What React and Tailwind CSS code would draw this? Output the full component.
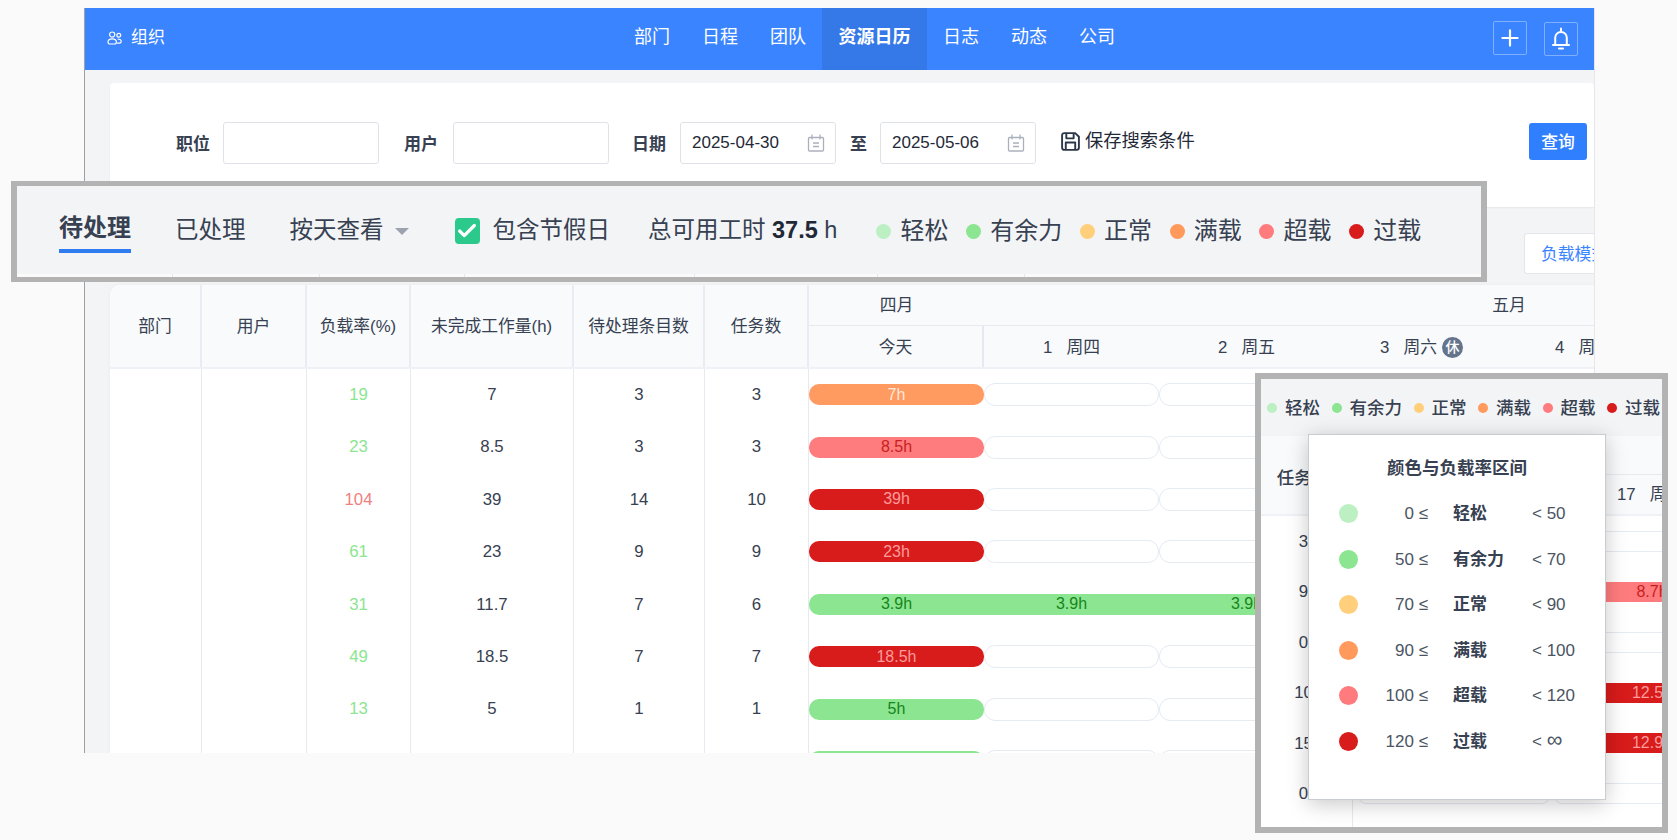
import React from 'react';
import { Plus, Check } from 'lucide-react';

const FONT = "font-['Liberation_Sans','Noto_Sans_CJK_SC',sans-serif]";

const levels = [
  { name: '轻松', from: '0', to: '50', dot: 'bg-[#bcf0c2]' },
  { name: '有余力', from: '50', to: '70', dot: 'bg-[#8ce590]' },
  { name: '正常', from: '70', to: '90', dot: 'bg-[#ffcf7c]' },
  { name: '满载', from: '90', to: '100', dot: 'bg-[#ff9a5c]' },
  { name: '超载', from: '100', to: '120', dot: 'bg-[#ff7b7e]' },
  { name: '过载', from: '120', to: '∞', dot: 'bg-[#d81b1b]' },
];

const navItems = ['部门', '日程', '团队', '资源日历', '日志', '动态', '公司'];

const barStyles = {
  orange: 'bg-[#ff9a60] text-[#ffe9dc]',
  light: 'bg-[#ff7c7e] text-[#c81e1e]',
  dark: 'bg-[#d81b1b] text-[#ff9c9c]',
  green: 'bg-[#8ce590] text-[#15861b]',
};

const rows = [
  { rate: '19', rateColor: 'text-[#8ce590]', left: '7', items: '3', tasks: '3', kind: 'orange', label: '7h' },
  { rate: '23', rateColor: 'text-[#8ce590]', left: '8.5', items: '3', tasks: '3', kind: 'light', label: '8.5h' },
  { rate: '104', rateColor: 'text-[#f08080]', left: '39', items: '14', tasks: '10', kind: 'dark', label: '39h' },
  { rate: '61', rateColor: 'text-[#8ce590]', left: '23', items: '9', tasks: '9', kind: 'dark', label: '23h' },
  { rate: '31', rateColor: 'text-[#8ce590]', left: '11.7', items: '7', tasks: '6', kind: 'green', label: '3.9h', long: true },
  { rate: '49', rateColor: 'text-[#8ce590]', left: '18.5', items: '7', tasks: '7', kind: 'dark', label: '18.5h' },
  { rate: '13', rateColor: 'text-[#8ce590]', left: '5', items: '1', tasks: '1', kind: 'green', label: '5h' },
  { rate: '', rateColor: '', left: '', items: '', tasks: '', kind: 'green', label: '' },
];

const CalendarIcon = () => (
  <svg width="18" height="18" viewBox="0 0 18 18" fill="none" stroke="#aab1bd" strokeWidth="1.3">
    <rect x="1.5" y="3.5" width="15" height="13.5" rx="1" />
    <path d="M5 0.5v5M13 0.5v5M6 9h6M6 12.5h6" />
  </svg>
);

const OrgIcon = () => (
  <svg width="15" height="14" viewBox="0 0 15 14" fill="none" stroke="currentColor" strokeWidth="1.2">
    <circle cx="5.2" cy="3.6" r="2.6" />
    <circle cx="11.8" cy="4.2" r="1.9" />
    <path d="M1 11.2c0-2.2 1.9-3.4 4.2-3.4s4.2 1.2 4.2 3.4c0 1.2-1 1.8-2 1.8H3c-1 0-2-.6-2-1.8z" />
    <path d="M10.6 8c2 0 3.6.9 3.6 2.6 0 1-.8 1.6-1.7 1.6h-2.4" />
  </svg>
);

const BellIcon = () => (
  <svg width="22" height="24" viewBox="0 0 22 24" fill="none" stroke="currentColor" strokeWidth="2" strokeLinecap="round">
    <path d="M11 1.5v2.2" />
    <path d="M5.2 17.5v-6.8a5.8 5.8 0 0 1 11.6 0v6.8" />
    <path d="M3 18h16" />
    <path d="M9 21.5h4" />
  </svg>
);

const SaveIcon = () => (
  <svg width="21" height="21" viewBox="0 0 20 20" fill="none" stroke="#2b3648" strokeWidth="1.8" strokeLinejoin="round">
    <path d="M4 2h10.5L18 5.5V16a2 2 0 0 1-2 2H4a2 2 0 0 1-2-2V4a2 2 0 0 1 2-2z" />
    <path d="M6 2v5h7V2" />
    <path d="M5.5 18v-7h9v7" />
  </svg>
);

const TextInput = ({ value }) => (
  <div className="flex h-[42px] w-[156px] items-center justify-between rounded-[3px] border border-[#dfe3e8] bg-white pl-[11px] pr-[10px] text-[17px] text-[#1f2937]">
    <span>{value}</span>
    {value && <CalendarIcon />}
  </div>
);

const Legend = ({ big }) => (
  <div className={big ? 'flex items-center gap-[17.75px] whitespace-nowrap' : 'flex items-center gap-[11.5px] whitespace-nowrap'}>
    {levels.map((l) => (
      <div key={l.name} className={big ? 'flex items-center gap-[9px]' : 'flex items-center gap-[8px]'}>
        <span className={`${l.dot} ${big ? 'h-[15px] w-[15px]' : 'h-[10px] w-[10px]'} shrink-0 rounded-full`}></span>
        <span className={big ? 'text-[24px] text-[#374151]' : 'text-[17.5px] font-medium text-[#374151]'}>{l.name}</span>
      </div>
    ))}
  </div>
);

const DayBar = ({ kind, label }) => (
  <div className={`${barStyles[kind]} flex h-[21px] items-center justify-center rounded-[10px] text-[16px]`}>{label}</div>
);

const EmptyBar = () => <div className="h-[23px] rounded-[11px] border-[1.5px] border-[#e6eaf1] bg-white"></div>;

const Row = ({ row }) => (
  <div className="contents">
    <div className="border-r border-[#e6eaf0]"></div>
    <div className="border-r border-[#e6eaf0]"></div>
    <div className={`flex items-center justify-center border-r border-[#e6eaf0] ${row.rateColor}`}>{row.rate}</div>
    <div className="flex items-center justify-center border-r border-[#e6eaf0]">{row.left}</div>
    <div className="flex items-center justify-center border-r border-[#e6eaf0]">{row.items}</div>
    <div className="flex items-center justify-center border-r border-[#e6eaf0]">{row.tasks}</div>
    {row.long ? (
      <div className="col-span-7 flex h-[21px] self-center rounded-l-[10px] bg-[#8ce590] text-[16px] text-[#15861b]">
        {Array(7)
          .fill('')
          .map((_, index) => (
            <span key={index} className="flex w-[175px] shrink-0 items-center justify-center">
              {row.label}
            </span>
          ))}
      </div>
    ) : (
      <>
        <div className="self-center">
          <DayBar kind={row.kind} label={row.label} />
        </div>
        {Array(6)
          .fill('')
          .map((_, index) => (
            <div key={index} className="self-center">
              <EmptyBar />
            </div>
          ))}
      </>
    )}
  </div>
);

const Day = ({ num, week, rest }) => (
  <div className="flex items-center justify-center border-t border-[#e6eaf0] pt-[2px]">
    <span className="mr-[14px]">{num}</span>
    <span>{week}</span>
    {rest && (
      <span className="ml-[5px] flex h-[21px] w-[21px] items-center justify-center rounded-full bg-[#64748b] text-[14px] font-medium text-white">
        休
      </span>
    )}
  </div>
);

const Table = () => (
  <div className="ml-[25px] overflow-hidden rounded-tl-[10px] bg-white text-[16.8px] text-[#374151] shadow-[0_0_4px_rgba(0,0,0,0.04)]">
    <div className="grid w-[1924px] grid-cols-[92px_105px_104px_163px_131px_104px_repeat(7,175px)] grid-rows-[40px_41.5px] border-b-2 border-[#eef1f5] bg-[#f8fafc]">
      <div className="row-span-2 flex items-center justify-center border-r-2 border-[#e9edf3] pt-[2px]">部门</div>
      <div className="row-span-2 flex items-center justify-center border-r-2 border-[#e9edf3] pt-[2px]">用户</div>
      <div className="row-span-2 flex items-center justify-center border-r-2 border-[#e9edf3] pt-[2px]">负载率(%)</div>
      <div className="row-span-2 flex items-center justify-center border-r-2 border-[#e9edf3] pt-[2px]">未完成工作量(h)</div>
      <div className="row-span-2 flex items-center justify-center border-r-2 border-[#e9edf3] pt-[2px]">待处理条目数</div>
      <div className="row-span-2 flex items-center justify-center border-r-2 border-[#e9edf3] pt-[2px]">任务数</div>
      <div className="flex items-center justify-center pt-[2px]">四月</div>
      <div className="col-span-6 flex items-center justify-center pt-[2px]">五月</div>
      <div className="flex items-center justify-center border-r-2 border-t border-[#e6eaf0] pt-[2px]">今天</div>
      <Day num="1" week="周四" />
      <Day num="2" week="周五" />
      <Day num="3" week="周六" rest />
      <Day num="4" week="周日" rest />
      <Day num="5" week="周一" />
      <Day num="6" week="周二" />
    </div>
    <div className="grid w-[1924px] grid-cols-[92px_105px_104px_163px_131px_104px_repeat(7,175px)] auto-rows-[52.4px]">
      {rows.map((row, index) => (
        <Row key={index} row={row} />
      ))}
    </div>
  </div>
);

const Header = () => (
  <div className="flex h-[62px] items-stretch bg-[#3b84ff] text-white">
    <div className="flex w-[533px] shrink-0 items-center gap-[9px] pb-[2px] pl-[22px] text-[17px]">
      <OrgIcon />
      <span>组织</span>
    </div>
    <div className="flex items-stretch text-[18px]">
      {navItems.map((item) => (
        <div
          key={item}
          className={
            item === '资源日历'
              ? 'flex items-center bg-[#3578e8] px-[16.5px] pb-[4px] font-bold'
              : 'flex items-center px-4 pb-[4px]'
          }
        >
          {item}
        </div>
      ))}
    </div>
    <div className="ml-auto flex items-center gap-[17px] pb-[2px] pr-[16px]">
      <div className="flex h-[34px] w-[34px] items-center justify-center rounded-[2px] border border-[#7fb0ff]">
        <Plus size={26} strokeWidth={2} />
      </div>
      <div className="mt-[2px] flex h-[34px] w-[34px] items-center justify-center rounded-[2px] border border-[#7fb0ff]">
        <BellIcon />
      </div>
    </div>
  </div>
);

const Filters = () => (
  <div className="ml-[25px] mt-[13px] flex h-[124px] items-start rounded-t-[4px] bg-white pl-[66px] pr-[7px] pt-[39px] text-[#374151] shadow-[0_1px_2px_rgba(0,0,0,0.06)]">
    <div className="flex h-[42px] items-center text-[17px] font-bold">
      <span className="mr-[13px] pt-[3px]">职位</span>
      <TextInput />
      <span className="ml-[25px] mr-[15px] pt-[3px]">用户</span>
      <TextInput />
      <span className="ml-[23px] mr-[14px] pt-[3px]">日期</span>
      <div className="font-normal">
        <TextInput value="2025-04-30" />
      </div>
      <span className="ml-[14px] mr-[13px] pt-[3px]">至</span>
      <div className="font-normal">
        <TextInput value="2025-05-06" />
      </div>
      <div className="mb-[4px] ml-[24px] flex items-center gap-[4px] text-[18.3px] font-normal text-[#1f2937]">
        <SaveIcon />
        <span>保存搜索条件</span>
      </div>
    </div>
    <div className="ml-auto mt-[1px] flex h-[37px] w-[58px] items-center justify-center rounded-[3px] bg-[#2f7fff] pt-[2px] text-[16.8px] font-medium text-white">
      查询
    </div>
  </div>
);

const TabsCallout = () => (
  <div className="absolute left-[11px] top-[181px] z-10 flex h-[101px] w-[1476px] flex-col border-x-[6px] border-y-[5px] border-[#b3b3b3] bg-[#f3f4f6] text-[23.5px] text-[#374151]">
    <div className="flex flex-1 items-center pl-[42px] pt-[2px]">
      <div className="relative -mt-[6px] mr-[44px] text-[24px] font-bold">
        待处理
        <span className="absolute -bottom-[7px] left-0 h-[4px] w-full bg-[#2f7bf0]"></span>
      </div>
      <span className="mr-[44px]">已处理</span>
      <span className="mr-[11px]">按天查看</span>
      <span className="mr-[46px] h-0 w-0 border-x-[7.5px] border-t-[7px] border-x-transparent border-t-[#9ca3af]"></span>
      <span className="mr-[13px] flex h-[26px] w-[25px] items-center justify-center rounded-[4px] bg-[#2bc98c]">
        <Check size={22} strokeWidth={3.5} className="text-white" />
      </span>
      <span className="mr-[38px]">包含节假日</span>
      <span className="whitespace-nowrap">
        总可用工时 <b className="text-[#1f2937]">37.5</b> h
      </span>
      <div className="ml-[39px]">
        <Legend big />
      </div>
    </div>
    <div className="flex h-[3px] bg-[#fafafa]">
      {[156, 147, 145, 230, 183, 147].map((w, index) => (
        <span key={index} className="border-r border-[#e3e6ea]" style={{ width: w }}></span>
      ))}
    </div>
  </div>
);

const miniRows = [
  { num: '3' },
  { num: '9', kind: 'light', label: '8.7h' },
  { num: '0' },
  { num: '10', kind: 'dark', label: '12.5h' },
  { num: '15', kind: 'dark', label: '12.9h' },
  { num: '0' },
];

const LegendCallout = () => (
  <div className="absolute left-[1255px] top-[373px] z-10 flex h-[460px] w-[413px] flex-col overflow-hidden border-[6px] border-[#b3b3b3] bg-white text-[16.8px] text-[#374151]">
    <div className="flex h-[57px] shrink-0 items-center bg-[#f3f4f6] pl-[6px] pt-[1px]">
      <Legend />
    </div>
    <div className="flex h-[80px] shrink-0 border-b-2 border-[#eef1f5] bg-[#f8fafc]">
      <div className="flex w-[92px] shrink-0 items-center justify-center pr-[8px] pt-[6px] text-[17.5px] font-medium">任务数</div>
      <div className="flex flex-1 flex-col">
        <div className="h-[39px] border-b border-[#e6eaf0]"></div>
        <div className="flex flex-1 items-center whitespace-nowrap pl-[264px]">
          <span className="mr-[14px]">17</span>
          <span>周一</span>
        </div>
      </div>
    </div>
    <div className="flex flex-1">
      <div className="w-[92px] shrink-0 border-r border-[#e6eaf0]">
        {miniRows.map((r, index) => (
          <div key={index} className="flex h-[50.5px] items-center justify-center pr-[6px]">
            {r.num}
          </div>
        ))}
      </div>
      <div className="flex-1 overflow-hidden">
        {miniRows.map((r, index) => (
          <div key={index} className="flex h-[50.5px] w-[400px] shrink-0 items-center">
            <div className="w-[201px] shrink-0 pl-[5px] pr-[4px]">
              <div className="h-[21px] rounded-[8px] border border-[#e6eaf1]"></div>
            </div>
            <div className="w-[196px] shrink-0">
              {r.kind ? (
                <div className={`${barStyles[r.kind]} flex h-[20px] items-center justify-center text-[16px]`}>{r.label}</div>
              ) : (
                <div className="h-[21px] rounded-[8px] border border-[#e6eaf1]"></div>
              )}
            </div>
          </div>
        ))}
      </div>
    </div>

    <div className="absolute left-[47px] top-[55px] h-[366px] w-[298px] border border-[#c9ccd1] bg-white px-[30px] text-[17px] text-[#4b5563] shadow-[0_4px_20px_rgba(0,0,0,0.22)]">
      <div className="flex h-[56px] items-end justify-center pb-[10px] text-[17.5px] font-bold text-[#374151]">颜色与负载率区间</div>
      {levels.map((l) => (
        <div key={l.name} className="grid h-[45.5px] grid-cols-[20px_69px_79px_1fr] items-center">
          <span className={`${l.dot} h-[19px] w-[19px] rounded-full`}></span>
          <span className="text-right">{l.from} ≤</span>
          <span className="ml-[25px] whitespace-nowrap font-bold text-[#374151]">{l.name}</span>
          <span className="ml-[25px] whitespace-nowrap">&lt; {l.to === '∞' ? <span className="text-[22px] leading-none">∞</span> : l.to}</span>
        </div>
      ))}
    </div>
  </div>
);

const App = () => {
  return (
    <div className={`relative h-[840px] w-full overflow-hidden bg-[#fafafa] ${FONT}`}>
      <div className="pt-[8px]">
        <div className="ml-[84px] h-[745px] w-[1511px] overflow-hidden border-l border-r border-l-[#a0a0a0] border-r-[#e5e7eb] bg-[#f3f4f6]">
          <Header />
          <Filters />
          <div className="flex h-[78px] justify-end pt-[26px]">
            <div className="h-[41px] w-[70px] overflow-hidden whitespace-nowrap rounded-l-[3px] border border-r-0 border-[#e3e7ec] bg-white pl-[16px] pt-[8px] text-[16.8px] text-[#3b84ff]">
              负载模式
            </div>
          </div>
          <Table />
        </div>
      </div>
      <TabsCallout />
      <LegendCallout />
    </div>
  );
};

export default App;
